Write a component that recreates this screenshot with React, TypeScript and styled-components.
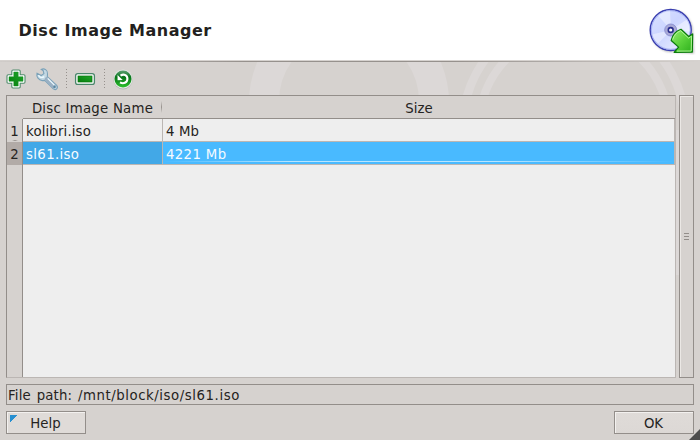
import React from 'react';
import styled, { createGlobalStyle } from 'styled-components';

const GlobalStyle = createGlobalStyle`
  * { box-sizing: border-box; }
  body { margin: 0; font: 13.3px/16px "DejaVu Sans", sans-serif; color: #252321; }
`;

const Window = styled.div`
  position: relative;
  width: 700px;
  height: 440px;
  display: flex;
  flex-direction: column;
  background: #d6d2cf;
  overflow: hidden;
`;

const Header = styled.header`
  height: 60px;
  flex: none;
  display: flex;
  align-items: center;
  justify-content: space-between;
  padding: 2px 3px 0 18.5px;
  background: #fff;
`;

const Title = styled.h1`
  margin: 0;
  font: bold 16px/20px "DejaVu Sans", sans-serif;
  letter-spacing: 0.53px;
  color: #231f20;
`;

const Rule = styled.div`
  height: 2px;
  flex: none;
  border-top: 1px solid #d6d2cf;
  background: linear-gradient(90deg, #d0ccc9, #96918d 35%, #96918d 65%, #d6d2cf);
`;

const Rings = styled.svg`
  position: absolute;
  left: 0;
  top: 62px;
  pointer-events: none;
`;

const Toolbar = styled.div`
  position: relative;
  height: 33px;
  flex: none;
  display: flex;
  align-items: center;
  padding-left: 4px;
`;

const ToolButton = styled.button`
  width: 24px;
  height: 24px;
  padding: 0;
  margin-right: 7px;
  border: 0;
  background: none;
  svg { display: block; }
`;

const Separator = styled.div`
  width: 1px;
  height: 20px;
  margin-right: 6px;
  background: repeating-linear-gradient(180deg, #96918d 0 1px, transparent 1px 3px);
`;

const Main = styled.main`
  height: 283px;
  flex: none;
  display: flex;
  gap: 3px;
  padding: 0 6px;
  position: relative;
`;

const Table = styled.div`
  width: 670px;
  border: 1px solid #938e8a;
  border-right-color: #bbb6b3;
  border-bottom-color: #bbb6b3;
  display: flex;
  flex-direction: column;
  background: #d6d2cf;
`;

const Row = styled.div<{ $fill?: boolean }>`
  display: grid;
  grid-template-columns: 16px 140px 1fr;
  grid-template-rows: 100%;
  height: ${(p) => (p.$fill ? 'auto' : '23px')};
  flex: ${(p) => (p.$fill ? '1' : 'none')};
  line-height: 26px;
  white-space: nowrap;
`;

const HeadCell = styled.div<{ $divider?: boolean }>`
  text-align: center;
  padding-right: ${(p) => (p.$divider ? '1px' : '0')};
  letter-spacing: ${(p) => (p.$divider ? '0.25px' : '0')};
  border-bottom: 1px solid #938e8a;
  background: ${(p) =>
    p.$divider
      ? 'linear-gradient(180deg, transparent, #96918d, transparent) right 1px center / 1px 12px no-repeat'
      : 'none'};
`;

const Corner = styled.div``;

const IndexCell = styled.div<{ $selected?: boolean; $tick?: boolean }>`
  text-align: center;
  border-right: 1px solid #938e8a;
  background: ${(p) => (p.$selected ? '#b2aba7' : '#d6d2cf')};
  ${(p) =>
    p.$tick &&
    'background: linear-gradient(90deg, transparent, #96918d, transparent) center bottom 1px / 6px 1px no-repeat #d6d2cf;'}
`;

const Cell = styled.div<{ $tone?: 'current' | 'selected' }>`
  padding-left: 3px;
  letter-spacing: ${(p) => (p.$tone ? '0.35px' : '0.15px')};
  border-bottom: 1px solid #bbb6b3;
  border-right: 1px solid #bbb6b3;
  color: ${(p) => (p.$tone ? '#f5fbff' : '#252321')};
  background: ${(p) =>
    p.$tone === 'current'
      ? '#42a8e7'
      : p.$tone === 'selected'
        ? 'linear-gradient(90deg, #49baff, #b9e5ff 25%, #b9e5ff 65%, #49baff) 0 19px / 100% 1px no-repeat #49baff'
        : '#eee'};
`;

const Blank = styled.div`
  grid-column: 2 / 4;
  background: #eee;
`;

const Scrollbar = styled.div`
  width: 15px;
  border: 1px solid #938e8a;
  background: #d6d2cf;
  box-shadow: inset 1px 1px #ebe8e5;
  display: flex;
  flex-direction: column;
  align-items: center;
  justify-content: center;
  gap: 2px;
`;

const Grip = styled.i`
  width: 5px;
  height: 1px;
  background: #938e8a;
`;

const Status = styled.div`
  height: 21px;
  flex: none;
  margin: 6px 6px 0;
  padding-left: 1px;
  border: 1px solid #938e8a;
  line-height: 21px;
  letter-spacing: 0.15px;
  word-spacing: 1.4px;
  white-space: nowrap;
`;

const PathText = styled.span`
  letter-spacing: 0.56px;
`;

const Footer = styled.footer`
  display: flex;
  justify-content: space-between;
  padding: 6px 6px 0;
`;

const Button = styled.button<{ $help?: boolean }>`
  width: 80px;
  height: 23px;
  padding: 2px 1px 0 0;
  border: 1px solid #938e8a;
  box-shadow: inset 1px 1px #f3f1ef;
  font: inherit;
  color: #252321;
  background: ${(p) =>
    p.$help
      ? 'linear-gradient(135deg, #278fd0 50%, transparent 51%) 3px 3px / 7px 7px no-repeat #dfdbd8'
      : 'linear-gradient(180deg, #dfdbd8, #dcd8d5)'};
`;

const ResizeCorner = styled.div`
  position: absolute;
  right: 0;
  bottom: 0;
  width: 11px;
  height: 11px;
  background: #4d4d4d;
  clip-path: polygon(100% 0, 100% 100%, 0 100%);
`;

const DiscIcon = () => (
  <svg width="48" height="48" viewBox="0 0 48 48">
    <defs>
      <linearGradient id="disc" x1="0" y1="0" x2="1" y2="1">
        <stop offset="0" stopColor="#d9e2ff" />
        <stop offset=".45" stopColor="#ccd5ff" />
        <stop offset="1" stopColor="#f0f4ff" />
      </linearGradient>
      <linearGradient id="arrow" x1="0" y1="0" x2="1" y2="1">
        <stop offset="0" stopColor="#9bec76" />
        <stop offset=".5" stopColor="#5bd23b" />
        <stop offset="1" stopColor="#2cae1c" />
      </linearGradient>
      <filter id="soft" x="-20%" y="-20%" width="140%" height="140%">
        <feGaussianBlur stdDeviation="1" />
      </filter>
    </defs>
    <circle cx="22.7" cy="24" r="21" fill="#777" opacity=".55" filter="url(#soft)" />
    <circle cx="21.7" cy="23" r="20.5" fill="url(#disc)" stroke="#3a3fb0" strokeWidth="1.4" />
    <circle cx="21.7" cy="23" r="19.3" fill="none" stroke="#98a5ef" strokeWidth=".8" />
    <path d="M22 23 9 8.5A20 20 0 0 1 21 3.5ZM22 23 3 27.5A19 19 0 0 0 9 36.5ZM22 23 38 12.5A19 19 0 0 1 41 24.5Z" fill="#fff" opacity=".4" />
    <circle cx="21.7" cy="23" r="6" fill="#a9a9d6" stroke="#8188ce" strokeWidth=".8" />
    <circle cx="21.7" cy="23" r="2.4" fill="#fff" stroke="#292c8d" strokeWidth="1.6" />
    <path d="m23 33 9-10 7 6.5 5-3 1 20-19-1.2 5-5Z" fill="#666" opacity=".5" filter="url(#soft)" />
    <path d="M22.2 33.5c1.2-5.2 4.8-9.6 9.8-11.2l7.7 7.2 4-2.6-.4 18.2-18.2.2 4.5-5.2Z" fill="url(#arrow)" stroke="#087a08" strokeWidth="1.2" strokeLinejoin="round" />
    <path d="M23.6 32.7c1.3-4.3 4-7.4 8.1-9l7.9 7.4 3-2-.4 14.9-14.3.1" fill="none" stroke="#baf7a0" strokeWidth=".9" />
  </svg>
);

const AddIcon = () => (
  <svg width="24" height="24" viewBox="0 0 24 24">
    <defs>
      <linearGradient id="green" x1="0" y1="1" x2="1" y2="0">
        <stop offset="0" stopColor="#057e0d" />
        <stop offset="1" stopColor="#20a52a" />
      </linearGradient>
    </defs>
    <path d="M9 3h6q1.2 0 1.2 1.2v3.6h3.6Q21 7.8 21 9v6q0 1.2-1.2 1.2h-3.6v3.6Q16.2 21 15 21H9q-1.2 0-1.2-1.2v-3.6H4.2Q3 16.2 3 15V9q0-1.2 1.2-1.2h3.6V4.2Q7.8 3 9 3Z" fill="#fff" stroke="#508b6c" strokeWidth="1.1" />
    <path d="M9.8 5h4.4v4.8H19v4.4h-4.8V19H9.8v-4.8H5V9.8h4.8Z" fill="url(#green)" stroke="#129020" strokeWidth=".5" />
  </svg>
);

const WrenchIcon = () => (
  <svg width="24" height="24" viewBox="0 0 24 24">
    <path d="m2 6.2 4.3 2.3 2.6-1.9-.7-2.9-2-1.3c3-1.6 6.8.7 6.3 4.6l-.2 2.7 9.4 8.6c2 2.7-.9 5.4-3.4 3.6l-8.6-8.5-2.4.2C3.7 13.2 1.1 10 2 6.2Z" fill="#c4d8e3" stroke="#7ba2b9" strokeWidth="1.1" />
    <path d="m11.8 12.3 7.2 7.2" stroke="#9ab0c3" strokeWidth="4.4" strokeLinecap="round" />
    <path d="m12.7 11.4 6.7 6.7M3.5 8.2c1.2 2.5 3.3 2.8 5.8 1.4" stroke="#edfaff" strokeWidth="1.3" fill="none" />
    <circle cx="19.4" cy="19.9" r="1.1" fill="#5486a2" />
  </svg>
);

const RemoveIcon = () => (
  <svg width="24" height="24" viewBox="0 0 24 24">
    <rect x="2.6" y="6.6" width="18.8" height="10.8" rx="2.2" fill="#fff" stroke="#4b876c" strokeWidth="1.3" />
    <rect x="5" y="9" width="14" height="6" fill="url(#green)" stroke="#08770d" strokeWidth=".7" />
  </svg>
);

const RefreshIcon = () => (
  <svg width="24" height="24" viewBox="0 0 24 24">
    <defs>
      <linearGradient id="ball" x1="0" y1="0" x2="0" y2="1">
        <stop offset="0" stopColor="#5c9e73" />
        <stop offset=".4" stopColor="#08751a" />
        <stop offset="1" stopColor="#2cc32c" />
      </linearGradient>
    </defs>
    <circle cx="12" cy="12.7" r="9.7" fill="#b4b7b4" />
    <circle cx="12" cy="12" r="9.5" fill="#e4e8e4" />
    <circle cx="12" cy="12" r="8.5" fill="url(#ball)" />
    <path d="M9.5 8.6c3.6-2.4 7.1-.1 6.9 3.4-.2 3.8-4.1 5.2-7.4 3.4" fill="none" stroke="#fff" strokeWidth="2.1" />
    <path d="m6.5 8 .1 5.3 5.1-.3Z" fill="#fff" />
  </svg>
);

export default function App() {
  return (
    <>
      <GlobalStyle />
      <Window>
        <Header>
          <Title>Disc Image Manager</Title>
          <DiscIcon />
        </Header>
        <Rule />
        <Rings width="700" height="378" viewBox="0 62 700 378">
          <g fill="none" stroke="#dcd8d7">
            <circle cx="349" cy="102" r="85" strokeWidth="30" />
            <circle cx="574" cy="126" r="111" strokeWidth="8.5" />
            <circle cx="574" cy="126" r="95" strokeWidth="8" />
            <path d="M677.5 130V275" strokeWidth="3" />
          </g>
        </Rings>
        <Toolbar>
          <ToolButton aria-label="Add"><AddIcon /></ToolButton>
          <ToolButton aria-label="Configure"><WrenchIcon /></ToolButton>
          <Separator />
          <ToolButton aria-label="Remove"><RemoveIcon /></ToolButton>
          <Separator />
          <ToolButton aria-label="Refresh"><RefreshIcon /></ToolButton>
        </Toolbar>
        <Main>
          <Table>
            <Row>
              <Corner />
              <HeadCell $divider>Disc Image Name</HeadCell>
              <HeadCell>Size</HeadCell>
            </Row>
            <Row>
              <IndexCell $tick>1</IndexCell>
              <Cell>kolibri.iso</Cell>
              <Cell>4 Mb</Cell>
            </Row>
            <Row>
              <IndexCell $selected>2</IndexCell>
              <Cell $tone="current">sl61.iso</Cell>
              <Cell $tone="selected">4221 Mb</Cell>
            </Row>
            <Row $fill>
              <IndexCell />
              <Blank />
            </Row>
          </Table>
          <Scrollbar><Grip /><Grip /><Grip /></Scrollbar>
        </Main>
        <Status>File path: <PathText>/mnt/block/iso/sl61.iso</PathText></Status>
        <Footer>
          <Button $help>Help</Button>
          <Button>OK</Button>
        </Footer>
        <ResizeCorner />
      </Window>
    </>
  );
}
